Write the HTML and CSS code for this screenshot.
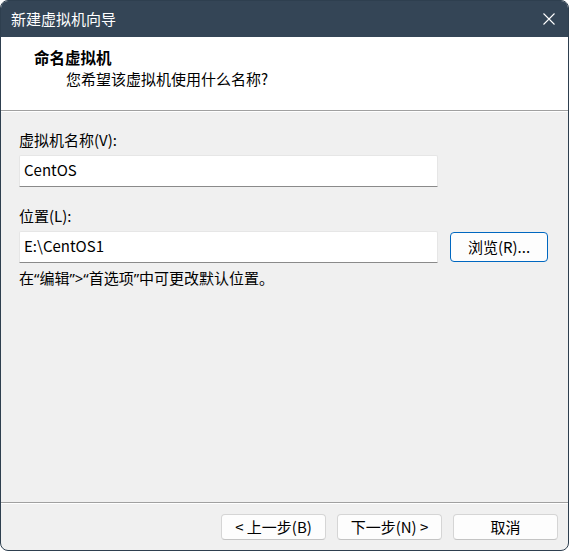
FILE: index.html
```html
<!DOCTYPE html>
<html lang="zh-CN">
<head>
<meta charset="utf-8">
<title>新建虚拟机向导</title>
<link rel="stylesheet" href="styles.css">
</head>
<body>
<div class="window">
  <div class="titlebar">
    <span class="title">新建虚拟机向导</span>
    <span class="close">
      <svg width="12" height="12" viewBox="0 0 12 12"><path d="M0.5 0.5 L11.5 11.5 M11.5 0.5 L0.5 11.5" stroke="#ffffff" stroke-width="1.1" fill="none"/></svg>
    </span>
  </div>
  <div class="header">
    <div class="header-title">命名虚拟机</div>
    <div class="header-sub">您希望该虚拟机使用什么名称?</div>
  </div>
  <div class="separator"></div>
  <div class="content">
    <div class="label">虚拟机名称(V):</div>
    <div class="field">CentOS</div>
    <div class="label label-gap">位置(L):</div>
    <div class="row">
      <div class="field">E:\CentOS1</div>
      <div class="btn btn-browse">浏览(R)...</div>
    </div>
    <div class="note">在“编辑”&gt;“首选项”中可更改默认位置。</div>
  </div>
  <div class="separator"></div>
  <div class="footer">
    <div class="btn btn-foot">&lt; 上一步(B)</div>
    <div class="btn btn-foot">下一步(N) &gt;</div>
    <div class="btn btn-foot">取消</div>
  </div>
</div>
</body>
</html>
```

FILE: styles.css
```css
html, body {
  margin: 0;
  padding: 0;
  background: #ffffff;
}
body {
  font-family: "Noto Sans CJK SC", sans-serif;
  font-size: 15px;
  line-height: 20px;
  color: #000000;
}
.window {
  width: 569px;
  height: 551px;
  box-sizing: border-box;
  border: 1px solid #2e3f4f;
  border-radius: 8px;
  overflow: hidden;
  background: #f0f0f0;
  display: flex;
  flex-direction: column;
}
.titlebar {
  height: 36px;
  flex: none;
  background: #344556;
  color: #ffffff;
  display: flex;
  align-items: center;
  justify-content: space-between;
  padding: 0 13px 0 10px;
}
.close {
  display: flex;
  width: 12px;
  height: 12px;
}
.header {
  height: 73px;
  flex: none;
  box-sizing: border-box;
  background: #ffffff;
  padding: 10px 0 0 33px;
}
.header-title {
  font-weight: bold;
  font-size: 15.5px;
}
.header-sub {
  margin-top: 2px;
  padding-left: 32px;
}
.separator {
  flex: none;
  height: 0;
  border-top: 1px solid #a0a0a0;
  border-bottom: 1px solid #ffffff;
}
.content {
  flex: 1;
  padding: 18px 18px 0 18px;
}
.label {
  margin-bottom: 5px;
}
.label-gap {
  margin-top: 19px;
}
.field {
  width: 419px;
  height: 32px;
  box-sizing: border-box;
  background: #ffffff;
  border: 1px solid #e6e6e6;
  border-bottom-color: #8a8a8a;
  border-radius: 2px 2px 0 0;
  padding: 0 0 2px 4px;
  display: flex;
  align-items: center;
}
.row {
  display: flex;
  align-items: center;
  gap: 12px;
}
.btn {
  box-sizing: border-box;
  height: 30px;
  background: #fdfdfd;
  border: 1px solid #d0d0d0;
  border-radius: 4px;
  display: flex;
  align-items: center;
  justify-content: center;
}
.btn-browse {
  width: 98px;
  border-color: #0067c0;
}
.note {
  margin-top: 5px;
  font-family: "Noto Sans", "Noto Sans CJK SC", sans-serif;
}
.footer {
  flex: none;
  display: flex;
  justify-content: flex-end;
  gap: 11px;
  padding: 10px 10px 10px 0;
}
.btn-foot {
  width: 105px;
  height: 26px;
  border-color: #d5d5d5;
  border-bottom-color: #c4c4c4;
}
```
